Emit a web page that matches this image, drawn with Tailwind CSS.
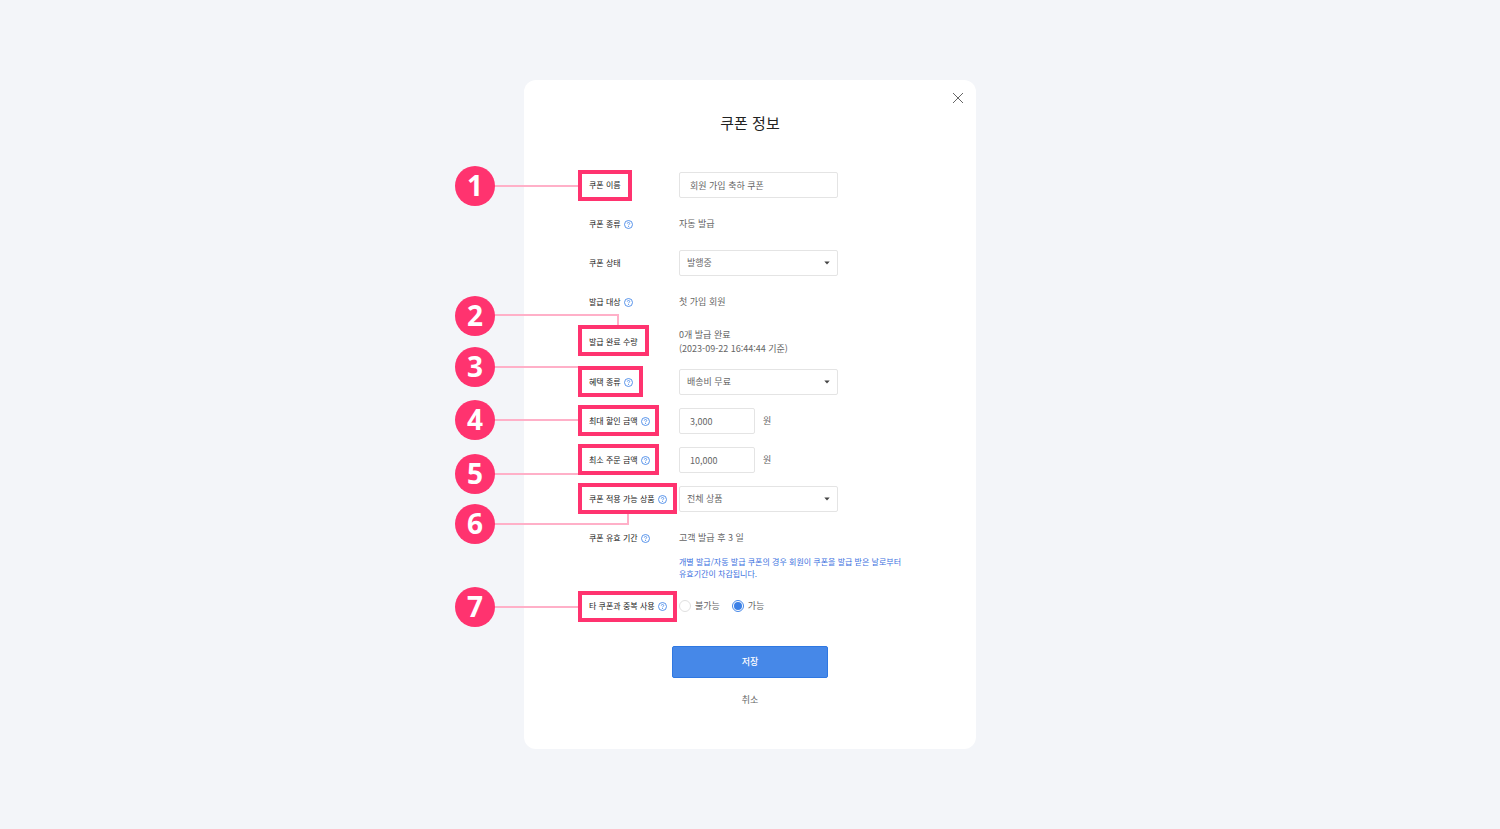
<!DOCTYPE html>
<html lang="ko">
<head>
    <meta charset="UTF-8">
    <meta name="viewport" content="width=device-width, initial-scale=1.0">
    <title>쿠폰 정보</title>
    <script src="https://cdn.jsdelivr.net/npm/@tailwindcss/browser@4"></script>
</head>
<body class="min-h-screen bg-[#f3f5f9] flex items-start justify-center py-20 font-['Noto_Sans_CJK_KR',sans-serif]">
    <!-- Shared icons -->
    <svg class="hidden">
        <symbol id="help" viewBox="0 0 18 18">
            <circle cx="9" cy="9" r="8" fill="none" stroke="currentColor" stroke-width="1.8"/>
            <path d="M6.6 7.2C6.6 5.7 7.6 4.9 9 4.9s2.4.8 2.4 2.1c0 1.6-2.3 1.8-2.3 3.6" fill="none" stroke="currentColor" stroke-width="1.7"/>
            <circle cx="9.1" cy="12.9" r="1.1" fill="currentColor"/>
        </symbol>
        <symbol id="caret" viewBox="0 0 6 4">
            <path d="M0.3 0.5h5.4L3 3.5z" fill="currentColor"/>
        </symbol>
    </svg>

    <main class="relative w-full max-w-[452px] bg-white rounded-xl pt-[31px] pb-[39px]">
        <button type="button" aria-label="닫기" class="absolute top-3 right-3 text-[#666]">
            <svg class="size-3" viewBox="0 0 12 12" fill="none" stroke="currentColor" stroke-width="1"><path d="M1 1l10 10M11 1L1 11"/></svg>
        </button>

        <h1 class="text-center text-[15px] leading-6 text-[#222]">쿠폰 정보</h1>

        <form class="mt-[37px]">
            <div class="flex flex-col gap-[13px] pl-[65px] pr-8 text-[9px] leading-[14px] text-[#666]">
                <div class="flex items-center min-h-[26px]">
                    <label for="name" class="w-[90px] shrink-0 text-[8px] text-[#222]">쿠폰 이름</label>
                    <input id="name" type="text" value="회원 가입 축하 쿠폰" class="w-[159px] h-[26px] px-2.5 border border-[#e4e4e4] rounded-xs">
                </div>
                <div class="flex items-center min-h-[26px]">
                    <div class="w-[90px] shrink-0 flex items-center gap-[3px] text-[8px] text-[#222]">
                        쿠폰 종류
                        <button type="button" aria-label="도움말" class="text-[#4688e8]"><svg class="size-[9px]"><use href="#help"/></svg></button>
                    </div>
                    <p>자동 발급</p>
                </div>
                <div class="flex items-center min-h-[26px]">
                    <label for="status" class="w-[90px] shrink-0 text-[8px] text-[#222]">쿠폰 상태</label>
                    <div class="relative">
                        <select id="status" class="appearance-none w-[159px] h-[26px] px-[7px] border border-[#e4e4e4] rounded-xs">
                            <option>발행중</option>
                        </select>
                        <svg class="absolute right-2 top-[11px] w-1.5 h-1 text-[#444] pointer-events-none"><use href="#caret"/></svg>
                    </div>
                </div>
                <div class="flex items-center min-h-[26px]">
                    <div class="w-[90px] shrink-0 flex items-center gap-[3px] text-[8px] text-[#222]">
                        발급 대상
                        <button type="button" aria-label="도움말" class="text-[#4688e8]"><svg class="size-[9px]"><use href="#help"/></svg></button>
                    </div>
                    <p>첫 가입 회원</p>
                </div>
                <div class="flex items-center min-h-[26px]">
                    <div class="w-[90px] shrink-0 text-[8px] text-[#222]">발급 완료 수량</div>
                    <p>0개 발급 완료<br>(2023-09-22 16:44:44 기준)</p>
                </div>
                <div class="flex items-center min-h-[26px]">
                    <div class="w-[90px] shrink-0 flex items-center gap-[3px] text-[8px] text-[#222]">
                        <label for="benefit">혜택 종류</label>
                        <button type="button" aria-label="도움말" class="text-[#4688e8]"><svg class="size-[9px]"><use href="#help"/></svg></button>
                    </div>
                    <div class="relative">
                        <select id="benefit" class="appearance-none w-[159px] h-[26px] px-[7px] border border-[#e4e4e4] rounded-xs">
                            <option>배송비 무료</option>
                        </select>
                        <svg class="absolute right-2 top-[11px] w-1.5 h-1 text-[#444] pointer-events-none"><use href="#caret"/></svg>
                    </div>
                </div>
                <div class="flex items-center min-h-[26px]">
                    <div class="w-[90px] shrink-0 flex items-center gap-[3px] text-[8px] text-[#222]">
                        <label for="max-discount">최대 할인 금액</label>
                        <button type="button" aria-label="도움말" class="text-[#4688e8]"><svg class="size-[9px]"><use href="#help"/></svg></button>
                    </div>
                    <input id="max-discount" type="text" value="3,000" class="w-[76px] h-[26px] px-2.5 border border-[#e4e4e4] rounded-xs">
                    <span class="ml-2">원</span>
                </div>
                <div class="flex items-center min-h-[26px]">
                    <div class="w-[90px] shrink-0 flex items-center gap-[3px] text-[8px] text-[#222]">
                        <label for="min-order">최소 주문 금액</label>
                        <button type="button" aria-label="도움말" class="text-[#4688e8]"><svg class="size-[9px]"><use href="#help"/></svg></button>
                    </div>
                    <input id="min-order" type="text" value="10,000" class="w-[76px] h-[26px] px-2.5 border border-[#e4e4e4] rounded-xs">
                    <span class="ml-2">원</span>
                </div>
                <div class="flex items-center min-h-[26px]">
                    <div class="w-[90px] shrink-0 flex items-center gap-[3px] text-[8px] text-[#222]">
                        <label for="products">쿠폰 적용 가능 상품</label>
                        <button type="button" aria-label="도움말" class="text-[#4688e8]"><svg class="size-[9px]"><use href="#help"/></svg></button>
                    </div>
                    <div class="relative">
                        <select id="products" class="appearance-none w-[159px] h-[26px] px-[7px] border border-[#e4e4e4] rounded-xs">
                            <option>전체 상품</option>
                        </select>
                        <svg class="absolute right-2 top-[11px] w-1.5 h-1 text-[#444] pointer-events-none"><use href="#caret"/></svg>
                    </div>
                </div>
                <div>
                    <div class="flex items-center min-h-[26px]">
                        <div class="w-[90px] shrink-0 flex items-center gap-[3px] text-[8px] text-[#222]">
                            쿠폰 유효 기간
                            <button type="button" aria-label="도움말" class="text-[#4688e8]"><svg class="size-[9px]"><use href="#help"/></svg></button>
                        </div>
                        <p>고객 발급 후 3 일</p>
                    </div>
                    <p class="mt-[5px] pl-[90px] text-[8px] leading-3 text-[#3a70e0]">개별 발급/자동 발급 쿠폰의 경우 회원이 쿠폰을 발급 받은 날로부터<br>유효기간이 차감됩니다.</p>
                </div>
                <div class="flex items-center min-h-[26px]">
                    <div class="w-[90px] shrink-0 flex items-center gap-[3px] text-[8px] text-[#222]">
                        타 쿠폰과 중복 사용
                        <button type="button" aria-label="도움말" class="text-[#4688e8]"><svg class="size-[9px]"><use href="#help"/></svg></button>
                    </div>
                    <div class="flex items-center gap-3">
                        <label class="flex items-center gap-1">
                            <input type="radio" name="overlap" class="appearance-none size-3 rounded-full border border-[#e0e0e0] p-px bg-clip-content checked:border-[#4688e8] checked:bg-[#3c80e6]">
                            불가능
                        </label>
                        <label class="flex items-center gap-1">
                            <input type="radio" name="overlap" checked class="appearance-none size-3 rounded-full border border-[#e0e0e0] p-px bg-clip-content checked:border-[#4688e8] checked:bg-[#3c80e6]">
                            가능
                        </label>
                    </div>
                </div>
            </div>

            <div class="mt-[27px] flex flex-col items-center gap-3 text-[9px]">
                <button type="submit" class="w-[156px] h-8 bg-[#4688e8] border border-[#2f78e2] rounded-xs font-medium text-white">저장</button>
                <button type="button" class="h-5 px-4 text-[#666]">취소</button>
            </div>
        </form>

        <!-- Numbered callouts -->
        <div class="absolute inset-0 pointer-events-none text-[28px] leading-[38px] font-bold text-white text-center font-['Noto_Sans',sans-serif]">
            <div class="absolute left-[-30px] top-[105px] w-[84px] h-0.5 bg-[#ffb0c8]"></div>
            <div class="absolute left-[-69px] top-[86px] size-10 rounded-full bg-[#ff336f]">1</div>
            <div class="absolute left-[54px] top-[90px] w-[54px] h-[31px] border-4 border-[#ff336f]"></div>

            <div class="absolute left-[-30px] top-[234px] w-[125px] h-[11px] border-t-2 border-r-2 border-[#ffb0c8]"></div>
            <div class="absolute left-[-69px] top-[216px] size-10 rounded-full bg-[#ff336f]">2</div>
            <div class="absolute left-[54px] top-[245px] w-[71px] h-[31px] border-4 border-[#ff336f]"></div>

            <div class="absolute left-[-30px] top-[286px] w-[84px] h-0.5 bg-[#ffb0c8]"></div>
            <div class="absolute left-[-69px] top-[267px] size-10 rounded-full bg-[#ff336f]">3</div>
            <div class="absolute left-[54px] top-[286px] w-[65px] h-[31px] border-4 border-[#ff336f]"></div>

            <div class="absolute left-[-30px] top-[339px] w-[84px] h-0.5 bg-[#ffb0c8]"></div>
            <div class="absolute left-[-69px] top-[320px] size-10 rounded-full bg-[#ff336f]">4</div>
            <div class="absolute left-[54px] top-[325px] w-[81px] h-[31px] border-4 border-[#ff336f]"></div>

            <div class="absolute left-[-30px] top-[393px] w-[84px] h-0.5 bg-[#ffb0c8]"></div>
            <div class="absolute left-[-69px] top-[374px] size-10 rounded-full bg-[#ff336f]">5</div>
            <div class="absolute left-[54px] top-[364px] w-[81px] h-[31px] border-4 border-[#ff336f]"></div>

            <div class="absolute left-[-30px] top-[434px] w-[135px] h-[11px] border-b-2 border-r-2 border-[#ffb0c8]"></div>
            <div class="absolute left-[-69px] top-[424px] size-10 rounded-full bg-[#ff336f]">6</div>
            <div class="absolute left-[54px] top-[403px] w-[99px] h-[31px] border-4 border-[#ff336f]"></div>

            <div class="absolute left-[-30px] top-[526px] w-[84px] h-0.5 bg-[#ffb0c8]"></div>
            <div class="absolute left-[-69px] top-[507px] size-10 rounded-full bg-[#ff336f]">7</div>
            <div class="absolute left-[54px] top-[511px] w-[99px] h-[31px] border-4 border-[#ff336f]"></div>
        </div>
    </main>
</body>
</html>
